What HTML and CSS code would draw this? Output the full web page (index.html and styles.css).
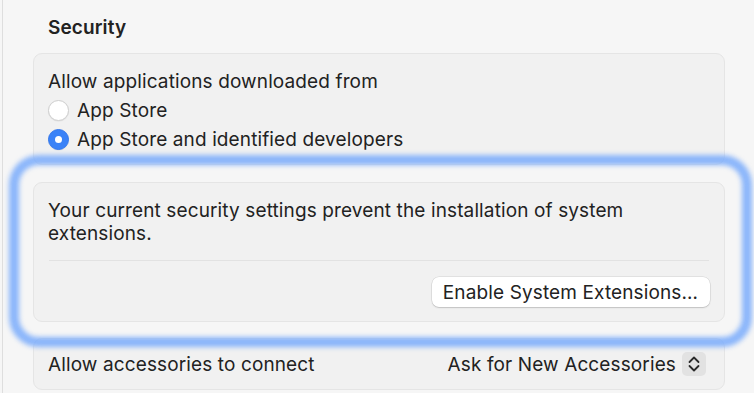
FILE: index.html
```html
<!DOCTYPE html>
<html>
<head>
<meta charset="utf-8">
<link rel="stylesheet" href="styles.css">
</head>
<body>
<div class="window">
  <h2 class="heading">Security</h2>
  <section class="group group-apps">
    <div class="row">Allow applications downloaded from</div>
    <label class="row radio-row"><span class="radio"></span>App Store</label>
    <label class="row radio-row"><span class="radio checked"></span>App Store and identified developers</label>
  </section>
  <section class="group group-ext">
    <p class="ext-text">Your current security settings prevent the installation of system extensions.</p>
    <div class="divider"></div>
    <div class="btn-row"><button class="btn">Enable System Extensions…</button></div>
  </section>
  <section class="group group-acc">
    <span class="acc-label">Allow accessories to connect</span>
    <span class="popup">Ask for New Accessories
      <span class="stepper"><svg width="24" height="24" viewBox="0 0 24 24"><path d="M7.5 10 L12 5.5 L16.5 10" fill="none" stroke="#2a2a2a" stroke-width="1.8" stroke-linecap="round" stroke-linejoin="round"/><path d="M7.5 14 L12 18.5 L16.5 14" fill="none" stroke="#2a2a2a" stroke-width="1.8" stroke-linecap="round" stroke-linejoin="round"/></svg></span>
    </span>
  </section>
</div>
</body>
</html>
```

FILE: styles.css
```css
html, body {
  margin: 0;
  padding: 0;
  background: #f6f6f6;
  height: 100%;
  overflow: hidden;
}
body {
  font-family: "Inter", "Noto Sans", sans-serif;
  color: #222222;
  font-size: 19px;
  letter-spacing: 0.12px;
}
.window {
  margin-left: 2px;
  border-left: 1px solid #dedede;
  padding: 0 29px 0 30px;
  height: 100%;
  box-sizing: border-box;
}
.heading {
  margin: 0;
  padding: 17px 0 0 15px;
  font-size: 19px;
  font-weight: 600;
  line-height: 22px;
  height: 53px;
  box-sizing: border-box;
}
.group {
  background: #f1f1f1;
  border: 1px solid #e5e5e5;
  border-radius: 9px;
  box-sizing: border-box;
}
.group-apps {
  padding: 13px 14px 10px;
  height: 112px;
}
.row {
  display: flex;
  align-items: center;
  line-height: 29px;
  height: 29px;
}
.radio {
  width: 21px;
  height: 21px;
  box-sizing: border-box;
  border-radius: 50%;
  background: #fff;
  border: 1px solid #cfcfcf;
  box-shadow: 0 0.5px 1px rgba(0,0,0,0.08);
  margin-right: 8px;
  position: relative;
  flex: none;
}
.radio.checked {
  background: #3a82f7;
  border-color: #3378ee;
}
.radio.checked::after {
  content: "";
  position: absolute;
  left: 6px;
  top: 6px;
  width: 7px;
  height: 7px;
  border-radius: 50%;
  background: #fff;
}
.group-ext {
  margin-top: 17px;
  height: 140px;
  padding: 16px 15px 14px 14px;
  position: relative;
}
.group-ext::before {
  content: "";
  position: absolute;
  left: -25px;
  top: -28px;
  right: -28px;
  bottom: -26px;
  border: 10px solid rgba(120, 170, 252, 0.85);
  border-radius: 30px;
  filter: blur(2.5px);
  pointer-events: none;
}
.ext-text {
  margin: 0;
  line-height: 23px;
  max-width: 630px;
}
.divider {
  height: 1px;
  background: #e2e2e2;
  margin-top: 15px;
  margin-left: 1px;
}
.btn-row {
  display: flex;
  justify-content: flex-end;
  margin-top: 16px;
}
.btn {
  font-family: inherit;
  font-size: 19px;
  letter-spacing: 0.12px;
  color: #222222;
  background: #fff;
  border: none;
  border-radius: 7px;
  height: 30px;
  padding: 0 12px 0 11px;
  margin-right: -1px;
  box-shadow: 0 0 0 0.5px rgba(0,0,0,0.12), 0 1px 1.5px rgba(0,0,0,0.15);
}
.group-acc {
  margin-top: 16px;
  height: 52px;
  padding: 0 18px 0 14px;
  display: flex;
  align-items: center;
  justify-content: space-between;
}
.popup {
  display: flex;
  align-items: center;
  gap: 6px;
}
.stepper {
  width: 24px;
  height: 24px;
  border-radius: 5px;
  background: #e2e2e2;
  display: flex;
}
```
